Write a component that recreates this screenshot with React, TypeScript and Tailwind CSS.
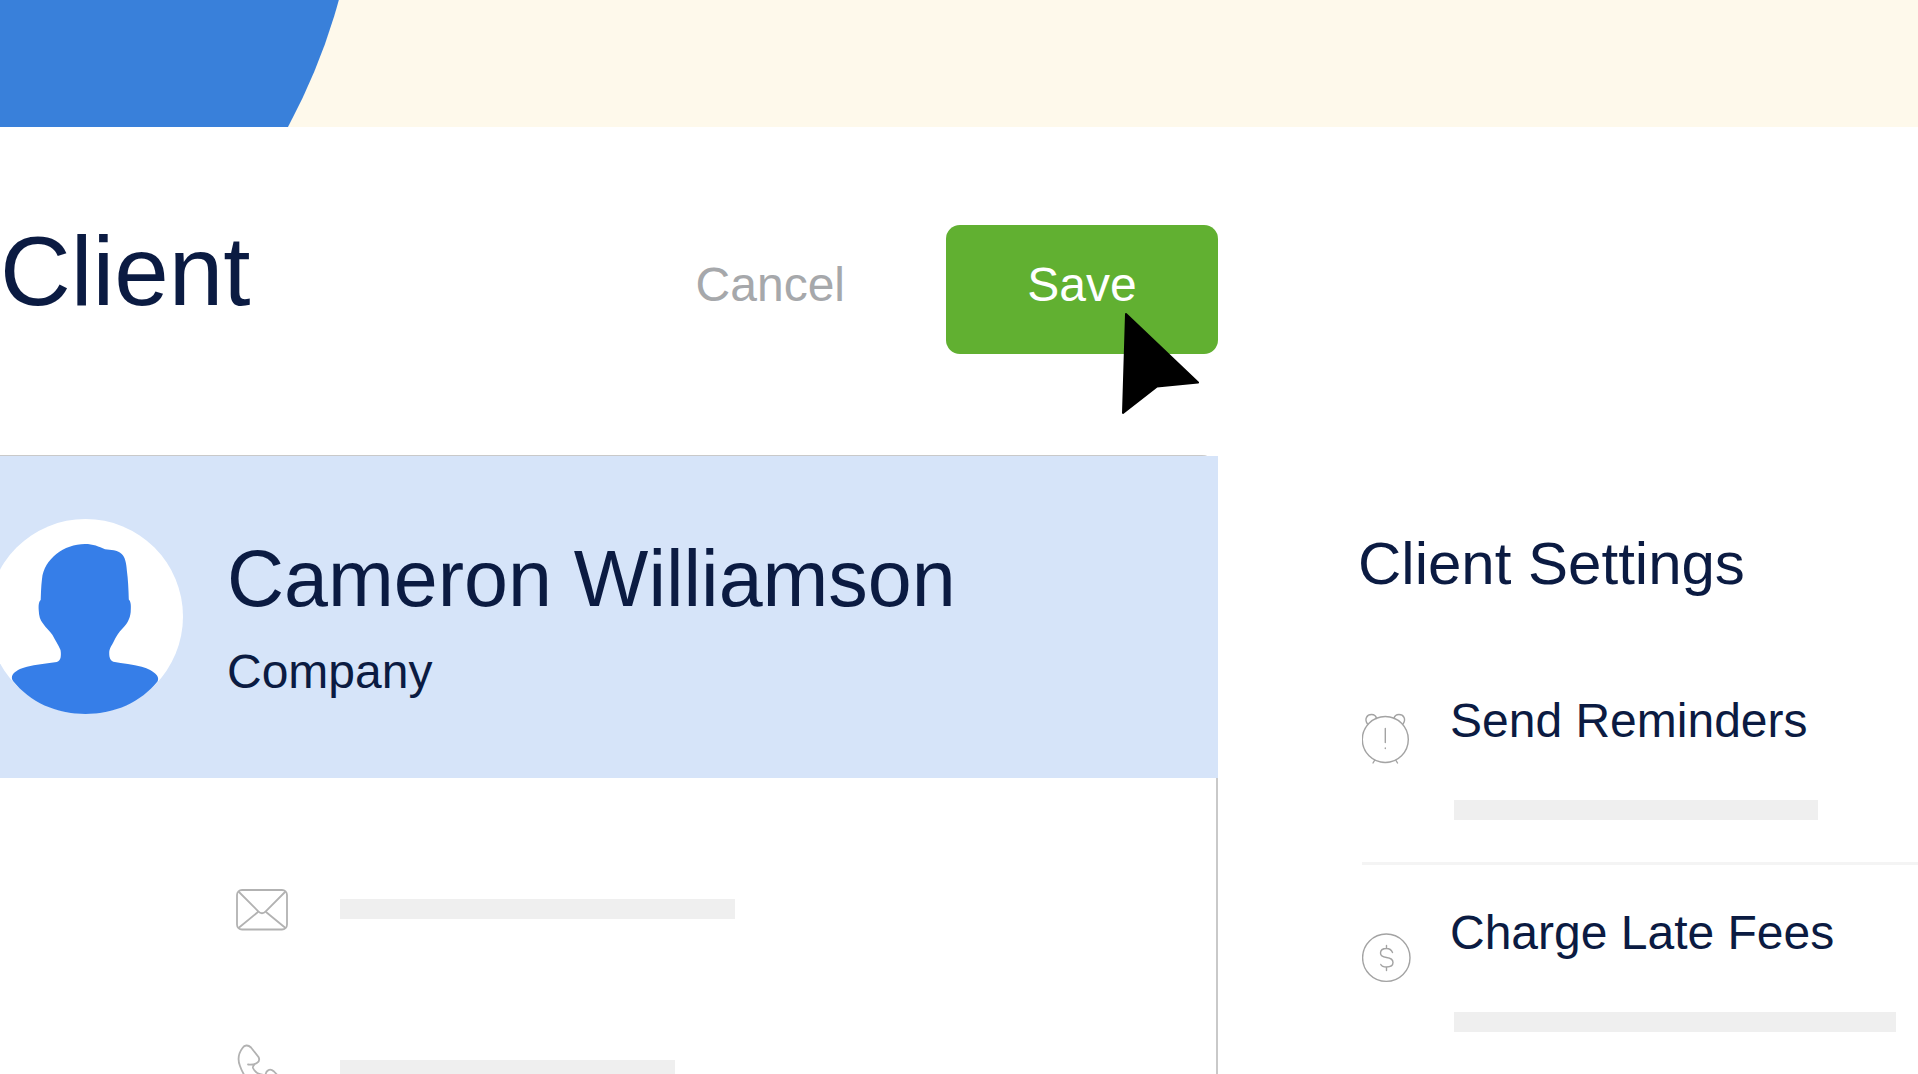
import type { ReactNode } from "react";

const AvatarIcon = () => (
  <svg viewBox="0 0 195 195" className="h-[195px] w-[195px] shrink-0" aria-hidden="true">
    <circle cx="97.5" cy="97.5" r="97.5" fill="#fff" />
    <path
      fill="#367ee8"
      d="M97 25 C76 25 56 40 54 60 C53 68 53 75 52.700 81 C50.500 83 50.500 87 50.700 91 C51 97 52 101 55 104.500 C58 109 62 112 64.500 116 C67 121 70.500 126 72.500 131 C73 134 73 136 72.500 139 C71.500 142 69.500 143 67 143.300 C57 145 48 145.500 39 147.700 C32 149.500 27 152 24.500 156 C23.500 158 23.700 160 25 162 C42 183 68 195 97.500 195 C127 195 153 183 169.500 162.500 C170.500 160.500 170.300 158.500 169 156.500 C166 152.500 160 149.500 153.700 147.700 C145 145.500 135 144.500 125.300 142.700 C121.500 141 121 137 121.300 132 C122 128.500 124 126 125.500 123 C128 117.500 131 113 134.500 109.500 C139 105 142 100 142.700 93 C143 88 143.300 83 140.800 80.500 C140.500 70 140 60 138.900 52 C138.500 44 137 38 133.700 35 C129 30.500 123 31.500 117 30.300 C111 27.500 105 25 97 25Z"
    />
  </svg>
);

const MailIcon = () => (
  <svg viewBox="0 0 52 52" className="h-[52px] w-[52px] shrink-0" fill="none" stroke="#b2b2b2" strokeWidth="1.8" aria-hidden="true">
    <rect x="1" y="7" width="50" height="39.500" rx="5" />
    <path d="M2.500 8.500 L22 28 Q26 32.500 30 28 L49.500 8.500 M2.500 45 L22 29 M49.500 45 L30 29" />
  </svg>
);

const PhoneIcon = () => (
  <svg viewBox="0 0 52 52" className="h-[52px] w-[52px] shrink-0" fill="none" stroke="#b2b2b2" strokeWidth="1.8" strokeLinecap="round" strokeLinejoin="round" aria-hidden="true">
    <path d="M12 20.500 C20 21 25 18 22.500 13 L15 3.500 C12 .5 8.500 1 6.500 4 C2 10 2 17 4 22 C9 36 20 46 34 50 C39 51 45 50 49 46 C51 43 50 40 48 38 L38 27.500 C34 24 30 26 29.500 31 C24 31 19 28.500 17 24 C16.500 22.500 17.500 21.700 18.500 20.500" />
  </svg>
);

const ReminderIcon = () => (
  <svg viewBox="0 0 50 60" className="h-[60px] w-[50px] shrink-0" fill="none" stroke="#a3a3a3" strokeWidth="1.4" strokeLinecap="round" aria-hidden="true">
    <circle cx="23.300" cy="27.500" r="23" />
    <path d="M5.500 12 C2 7 5 2.500 9.500 2.500 C12 2.500 14 4 14.500 6.500 M41 12 C44.500 7 41.500 2.500 37 2.500 C34.500 2.500 32.500 4 32 6.500" />
    <path d="M23.300 16.500 V30.500 M23.300 36 V36.500 M12.500 48.500 L11 51 M34 48.500 L35.500 51" />
  </svg>
);

const FeeIcon = () => (
  <svg viewBox="0 0 50 60" className="h-[60px] w-[50px] shrink-0" fill="none" stroke="#a3a3a3" strokeWidth="1.4" strokeLinecap="round" aria-hidden="true">
    <circle cx="24.300" cy="33.700" r="23.700" />
    <path d="M30.500 28.500 C29.500 26 28 24.500 24.500 24.500 C21 24.500 18.500 26.200 18.500 29 C18.500 32 21 33 24.500 33.500 C28.500 34 31 35.500 31 38.500 C31 41.500 28 43 24.500 43 C21 43 19.500 42 18.800 40.500 M24.500 21.500 V24.500 M24.500 43 V46.500" />
  </svg>
);

const Cursor = () => (
  <svg viewBox="0 0 80 104" className="pointer-events-none absolute top-[88px] left-[176px] h-[104px] w-[80px]" aria-hidden="true">
    <path d="M4 1 L76 69.500 L35 73.500 L1 100Z" fill="#000" stroke="#000" strokeWidth="2" strokeLinejoin="round" />
  </svg>
);

const SettingItem = ({ icon, title, bar }: { icon: ReactNode; title: string; bar: string }) => (
  <li className="flex gap-[38px] border-b-[3px] border-[#f4f4f4] pt-[39px] pb-[42px]">
    <div className="pt-5">{icon}</div>
    <div className="min-w-0">
      <h3 className="text-[48px] leading-[58px] whitespace-nowrap">{title}</h3>
      <div className={`mt-[50px] ml-1 h-5 bg-[#efefef] ${bar}`} />
    </div>
  </li>
);

const App = () => {
  return (
    <div className="h-screen overflow-hidden bg-white font-['Liberation_Sans',Arial,sans-serif] text-[#0b1b42]">
      <div className="relative h-[127px] overflow-hidden bg-[#fef9eb]">
        <div className="absolute -top-[758px] -left-[840px] h-[1200px] w-[1200px] rounded-full bg-[#3980da]" />
      </div>

      <div className="flex">
        <main className="min-w-0 flex-1">
          <header className="flex items-start pt-[98px] pb-[101px]">
            <h1 className="flex-1 text-[98px] leading-[92px]">Client</h1>
            <button type="button" className="mr-[101px] h-[129px] pb-[10px] text-[48px] text-[#a6a8ab]">
              Cancel
            </button>
            <div className="relative">
              <button type="button" className="h-[129px] w-[272px] rounded-[14px] bg-[#61b031] pb-[10px] text-[48px] text-white">
                Save
              </button>
              <Cursor />
            </div>
          </header>

          <section className="rounded-tr-2xl border-t border-r-2 border-[#c9c9c9]">
            <div className="-mr-[2px] -ml-3 flex bg-[#d6e4f9] pt-[63px] pb-16">
              <AvatarIcon />
              <div className="ml-11 pt-4">
                <h2 className="text-[79px] leading-[88px] whitespace-nowrap">Cameron Williamson</h2>
                <p className="mt-[21px] text-[48px] leading-[56px]">Company</p>
              </div>
            </div>
            <ul className="flex flex-col gap-[109px] pt-[105px] pb-[105px] pl-[236px]">
              <li className="flex items-center gap-[52px]">
                <MailIcon />
                <div className="h-5 w-[395px] bg-[#efefef]" />
              </li>
              <li className="flex items-center gap-[52px]">
                <PhoneIcon />
                <div className="h-5 w-[335px] bg-[#efefef]" />
              </li>
            </ul>
          </section>
        </main>

        <aside className="w-[700px] shrink-0 pt-[400px]">
          <h2 className="mb-[52px] pl-[140px] text-[60px] leading-[74px]">Client Settings</h2>
          <ul className="pl-[144px]">
            <SettingItem icon={<ReminderIcon />} title="Send Reminders" bar="w-[364px]" />
            <SettingItem icon={<FeeIcon />} title="Charge Late Fees" bar="w-[442px]" />
          </ul>
        </aside>
      </div>
    </div>
  );
};

export default App;
